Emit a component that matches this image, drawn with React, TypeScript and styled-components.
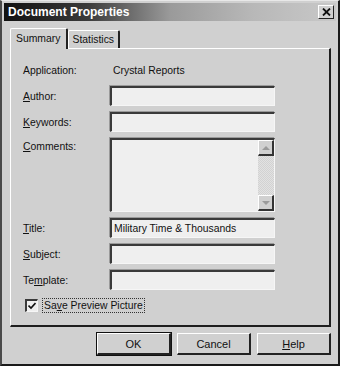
import styled, { createGlobalStyle } from "styled-components";

const GlobalStyle = createGlobalStyle`
  html, body {
    margin: 0;
    padding: 0;
    background: #d0d0d0;
  }
  body {
    font-family: "Liberation Sans", Arial, sans-serif;
    font-size: 10.4px;
    color: #111;
  }
`;

const Window = styled.div`
  width: 340px;
  height: 366px;
  box-sizing: border-box;
  background: #d0d0d0;
  border-left: 2px solid #4a4a4a;
  border-right: 2px solid #1a1a1a;
  border-bottom: 2px solid #1a1a1a;
  border-top: 1px solid #e8e8e8;
  padding: 2px 2px 0 2px;
  display: flex;
  flex-direction: column;
`;

const TitleBar = styled.div`
  height: 18px;
  display: flex;
  align-items: center;
  justify-content: space-between;
  padding: 0 2px 0 4px;
  background: linear-gradient(to right, #111 0%, #3a3a3a 25%, #9a9a9a 50%, #b8b8b8 75%, #c8c8c8 100%);
`;

const TitleText = styled.span`
  color: #fff;
  font-weight: bold;
  font-size: 12px;
`;

const CloseButton = styled.div`
  width: 16px;
  height: 14px;
  box-sizing: border-box;
  background: #d0d0d0;
  border-top: 1px solid #fff;
  border-left: 1px solid #fff;
  border-right: 1px solid #222;
  border-bottom: 1px solid #222;
  display: flex;
  align-items: center;
  justify-content: center;
`;

const Body = styled.div`
  flex: 1;
  display: flex;
  flex-direction: column;
  padding: 6px 5px 0 6px;
`;

const TabRow = styled.div`
  display: flex;
  align-items: flex-end;
  height: 21px;
  position: relative;
  z-index: 1;
`;

const Tab = styled.div<{ $active?: boolean }>`
  box-sizing: border-box;
  height: ${(p) => (p.$active ? "21px" : "18px")};
  padding: ${(p) => (p.$active ? "0 6px 2px 5px" : "0 4px 0 3px")};
  margin-bottom: ${(p) => (p.$active ? "-1px" : "0")};
  background: #d0d0d0;
  border-top: 1px solid #fff;
  border-left: 1px solid #fff;
  border-right: 2px solid #222;
  border-top-left-radius: 2px;
  border-top-right-radius: 2px;
  display: flex;
  align-items: center;
`;

const Panel = styled.div`
  box-sizing: border-box;
  width: 321px;
  height: 279px;
  border-top: 1px solid #fff;
  border-left: 1px solid #fff;
  border-right: 2px solid #1e1e1e;
  border-bottom: 2px solid #1e1e1e;
  padding: 11px 0 0 12px;
  display: flex;
  flex-direction: column;
  gap: 6px;
`;

const Row = styled.div<{ $top?: boolean; $h?: number }>`
  display: flex;
  align-items: ${(p) => (p.$top ? "flex-start" : "center")};
  height: ${(p) => p.$h ?? 20}px;
`;

const Label = styled.div<{ $top?: boolean }>`
  width: 87px;
  flex: none;
  padding-top: ${(p) => (p.$top ? "3px" : "0")};
`;

const Value = styled.div`
  padding-left: 3px;
`;

const Field = styled.div<{ $h?: number }>`
  box-sizing: border-box;
  width: 165px;
  height: ${(p) => p.$h ?? 20}px;
  background: #efefef;
  border-top: 2px solid #3a3a3a;
  border-left: 2px solid #3a3a3a;
  border-right: 1px solid #f6f6f6;
  border-bottom: 1px solid #f6f6f6;
  box-shadow: -1px -1px 0 #9a9a9a;
  display: flex;
  align-items: center;
  padding-left: 2px;
  position: relative;
`;

const ScrollBar = styled.div`
  position: absolute;
  top: 0;
  right: 0;
  bottom: 0;
  width: 16px;
  display: flex;
  flex-direction: column;
  background: repeating-conic-gradient(#e2e2e2 0% 25%, #d2d2d2 0% 50%) 0 0 / 2px 2px;
`;

const ScrollBtn = styled.div`
  box-sizing: border-box;
  width: 16px;
  height: 16px;
  background: #d0d0d0;
  border-top: 1px solid #fff;
  border-left: 1px solid #fff;
  border-right: 2px solid #333;
  border-bottom: 2px solid #333;
  display: flex;
  align-items: center;
  justify-content: center;
`;

const Track = styled.div`
  flex: 1;
`;

const Arrow = styled.div<{ $down?: boolean }>`
  width: 0;
  height: 0;
  border-left: 4px solid transparent;
  border-right: 4px solid transparent;
  ${(p) =>
    p.$down ? "border-top: 4px solid #9a9a9a;" : "border-bottom: 4px solid #9a9a9a;"}
`;

const CheckRow = styled.div`
  display: flex;
  align-items: center;
  height: 15px;
  margin-top: 2px;
  padding-left: 2px;
  gap: 4px;
`;

const CheckBox = styled.div`
  box-sizing: border-box;
  width: 13px;
  height: 13px;
  background: #efefef;
  border-top: 2px solid #3a3a3a;
  border-left: 2px solid #3a3a3a;
  border-right: 1px solid #f6f6f6;
  border-bottom: 1px solid #f6f6f6;
  display: flex;
  align-items: center;
  justify-content: center;
`;

const CheckLabel = styled.div`
  padding: 0 1px;
  border: 1px dotted #333;
  line-height: 13px;
`;

const ButtonRow = styled.div`
  display: flex;
  justify-content: flex-end;
  gap: 6px;
  padding: 6px 0 0 0;
`;

const Button = styled.div<{ $default?: boolean }>`
  box-sizing: border-box;
  width: 74px;
  height: 22px;
  background: #d0d0d0;
  border-top: 1px solid #fff;
  border-left: 1px solid #fff;
  border-right: 2px solid #222;
  border-bottom: 2px solid #222;
  ${(p) => (p.$default ? "outline: 1px solid #111;" : "")}
  display: flex;
  align-items: center;
  justify-content: center;
  font-size: 11px;
`;

const rows: { label: string; key: number; value?: string }[] = [
  { label: "Title:", key: 0, value: "Military Time & Thousands" },
  { label: "Subject:", key: 0 },
  { label: "Template:", key: 2 },
];

const Accel = ({ text, at }: { text: string; at: number }) => (
  <>
    {text.slice(0, at)}
    <u>{text[at]}</u>
    {text.slice(at + 1)}
  </>
);

export default function App() {
  return (
    <>
      <GlobalStyle />
      <Window>
        <TitleBar>
          <TitleText>Document Properties</TitleText>
          <CloseButton>
            <svg width="9" height="8" viewBox="0 0 9 8">
              <path d="M1 0.5 L8 7.5 M8 0.5 L1 7.5" stroke="#111" strokeWidth="1.8" />
            </svg>
          </CloseButton>
        </TitleBar>
        <Body>
          <TabRow>
            <Tab $active>Summary</Tab>
            <Tab>Statistics</Tab>
          </TabRow>
          <Panel>
            <Row>
              <Label>Application:</Label>
              <Value>Crystal Reports</Value>
            </Row>
            <Row>
              <Label>
                <Accel text="Author:" at={0} />
              </Label>
              <Field />
            </Row>
            <Row>
              <Label>
                <Accel text="Keywords:" at={0} />
              </Label>
              <Field />
            </Row>
            <Row $top $h={74}>
              <Label $top>
                <Accel text="Comments:" at={0} />
              </Label>
              <Field $h={74}>
                <ScrollBar>
                  <ScrollBtn>
                    <Arrow />
                  </ScrollBtn>
                  <Track />
                  <ScrollBtn>
                    <Arrow $down />
                  </ScrollBtn>
                </ScrollBar>
              </Field>
            </Row>
            {rows.map((r) => (
              <Row key={r.label}>
                <Label>
                  <Accel text={r.label} at={r.key} />
                </Label>
                <Field>{r.value}</Field>
              </Row>
            ))}
            <CheckRow>
              <CheckBox>
                <svg width="8" height="8" viewBox="0 0 8 8">
                  <path d="M0.5 3.5 L3 6 L7.5 1" stroke="#111" strokeWidth="1.6" fill="none" />
                </svg>
              </CheckBox>
              <CheckLabel>
                <Accel text="Save Preview Picture" at={2} />
              </CheckLabel>
            </CheckRow>
          </Panel>
          <ButtonRow>
            <Button $default>OK</Button>
            <Button>Cancel</Button>
            <Button>
              <Accel text="Help" at={0} />
            </Button>
          </ButtonRow>
        </Body>
      </Window>
    </>
  );
}
